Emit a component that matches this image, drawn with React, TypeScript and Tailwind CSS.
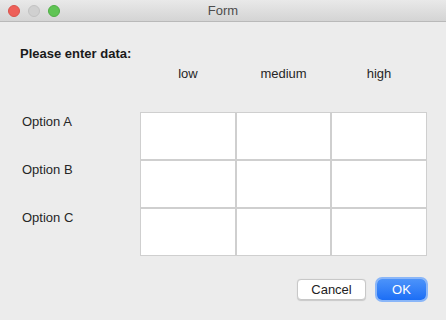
import React from 'react'

const columns = ['low', 'medium', 'high']
const options = ['Option A', 'Option B', 'Option C']

const App = () => {
    return (
        <div className="w-[446px] h-[320px] bg-[#ececec] flex flex-col overflow-hidden font-['Liberation_Sans',Arial,sans-serif] text-[13px] text-[#222222]">
            {/* title bar */}
            <div className="relative h-[22px] flex items-center justify-center bg-gradient-to-b from-[#e9e9e9] to-[#d4d4d4] border-b border-[#b9b9b9]">
                <div className="absolute left-[8px] top-[5px] flex gap-[8px]">
                    <span className="w-[12px] h-[12px] rounded-full bg-[#ee5f58] border border-[#d9534b]" />
                    <span className="w-[12px] h-[12px] rounded-full bg-[#d0d0d0] border border-[#c2c2c2]" />
                    <span className="w-[12px] h-[12px] rounded-full bg-[#5fc454] border border-[#4fae45]" />
                </div>
                <div className="text-[13px] text-[#4d4d4d] leading-none">Form</div>
            </div>
            {/* title bar */}
            {/* body */}
            <div className="flex-1 flex flex-col px-[20px] pt-[24px]">
                <div className="font-bold leading-[16px] text-[#1a1a1a]">Please enter data:</div>
                <div className="grid grid-cols-[120px_96px_95px_96px] mt-[3px]">
                    <div />
                    {columns.map((col) => (
                        <div key={col} className="h-[18px] leading-[18px] text-center text-[#262626]">{col}</div>
                    ))}
                </div>
                <div className="grid grid-cols-[120px_96px_95px_96px] mt-[29px]">
                    {options.map((opt) => (
                        <React.Fragment key={opt}>
                            <div className="h-[48px] pl-[2px] pt-[2px] leading-[16px] text-[#262626]">{opt}</div>
                            {columns.map((col) => (
                                <div key={col} className="h-[48px] bg-white border border-[#cfcfcf]" />
                            ))}
                        </React.Fragment>
                    ))}
                </div>
                <div className="mt-auto mb-[20px] flex justify-end gap-[11px]">
                    <button className="w-[69px] h-[21px] rounded-[4px] bg-white border border-[#c8c8c8] shadow-[0_0.5px_1px_rgba(0,0,0,0.15)] text-[13px] text-[#222222] leading-none">Cancel</button>
                    <button className="w-[49px] h-[21px] rounded-[5px] bg-gradient-to-b from-[#4c93fa] to-[#1b6ef5] ring-[2px] ring-[#8ab6f8] text-[13px] text-white leading-none">OK</button>
                </div>
            </div>
            {/* body */}
        </div>
    )
}

export default App
